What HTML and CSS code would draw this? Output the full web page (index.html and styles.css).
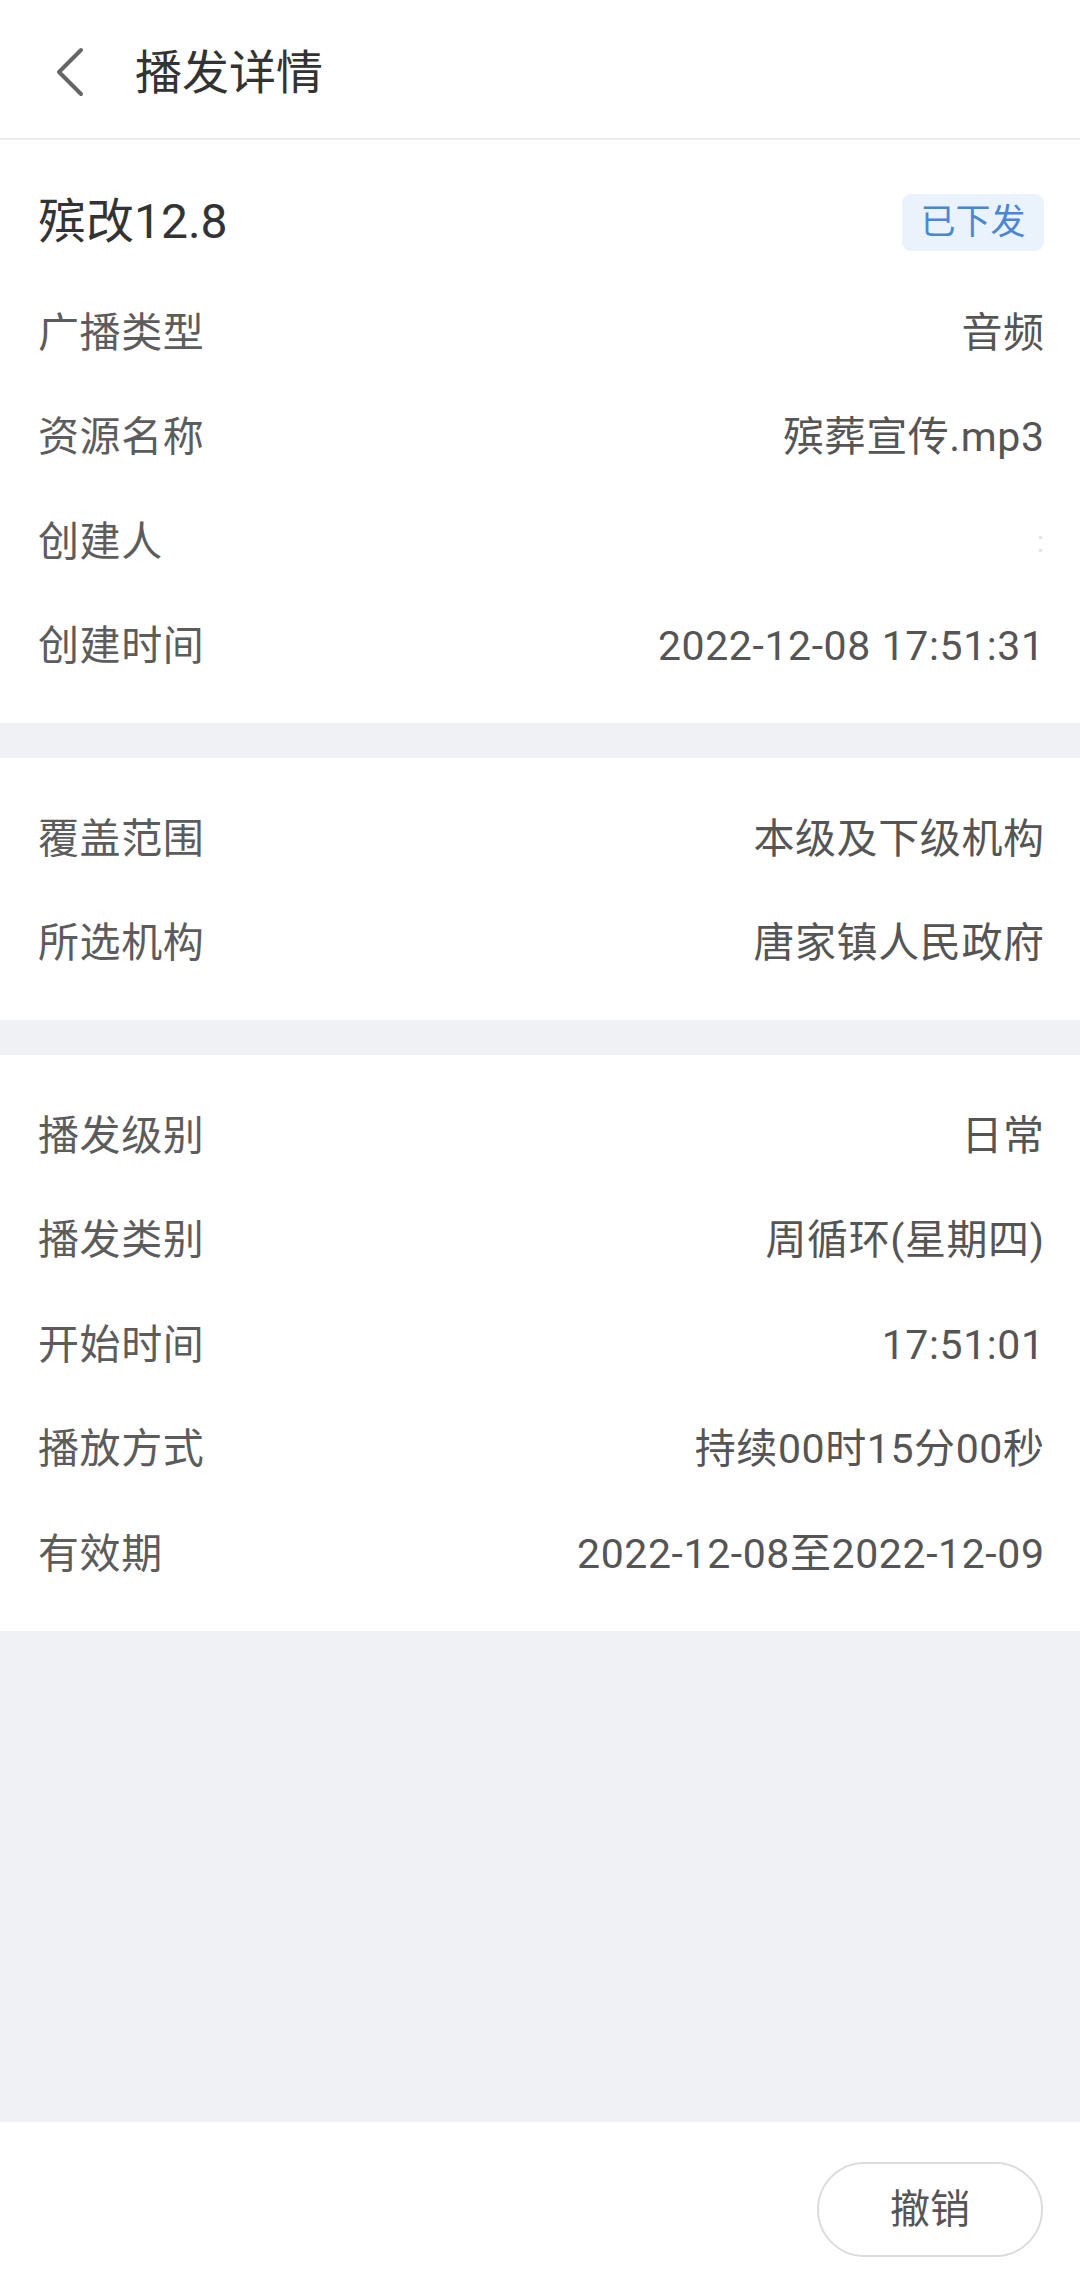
FILE: index.html
```html
<!DOCTYPE html>
<html lang="zh-CN">
<head>
<meta charset="utf-8">
<title>播发详情</title>
<link rel="stylesheet" href="styles.css">
</head>
<body>
<div class="page">
  <header class="topbar">
    <svg class="back" width="30" height="50" viewBox="0 0 30 50" aria-hidden="true">
      <polyline points="26,3 4,25 26,47" fill="none" stroke="#666" stroke-width="4" stroke-linecap="round" stroke-linejoin="round"/>
    </svg>
    <h1 class="topbar-title">播发详情</h1>
  </header>

  <section class="card">
    <div class="card-head">
      <span class="card-title">殡改12.8</span>
      <span class="badge">已下发</span>
    </div>
    <div class="row"><span class="label">广播类型</span><span class="value">音频</span></div>
    <div class="row"><span class="label">资源名称</span><span class="value">殡葬宣传.mp3</span></div>
    <div class="row"><span class="label">创建人</span><span class="value faint">:</span></div>
    <div class="row"><span class="label">创建时间</span><span class="value">2022-12-08 17:51:31</span></div>
  </section>

  <section class="card">
    <div class="row"><span class="label">覆盖范围</span><span class="value">本级及下级机构</span></div>
    <div class="row"><span class="label">所选机构</span><span class="value">唐家镇人民政府</span></div>
  </section>

  <section class="card">
    <div class="row"><span class="label">播发级别</span><span class="value">日常</span></div>
    <div class="row"><span class="label">播发类别</span><span class="value">周循环(星期四)</span></div>
    <div class="row"><span class="label">开始时间</span><span class="value">17:51:01</span></div>
    <div class="row"><span class="label">播放方式</span><span class="value">持续00时15分00秒</span></div>
    <div class="row"><span class="label">有效期</span><span class="value">2022-12-08至2022-12-09</span></div>
  </section>

  <div class="spacer"></div>

  <footer class="bottombar">
    <button class="btn-cancel" type="button">撤销</button>
  </footer>
</div>
</body>
</html>
```

FILE: styles.css
```css
* {
  box-sizing: border-box;
}

html, body {
  margin: 0;
  padding: 0;
  background: #f0f1f5;
}

body {
  font-family: Roboto, "Noto Sans CJK SC", "Noto Sans", sans-serif;
  color: #5c5c5c;
}

.page {
  display: flex;
  flex-direction: column;
  width: 1080px;
  height: 2293px;
  background: #f0f1f5;
}

.topbar {
  display: flex;
  align-items: center;
  height: 140px;
  padding: 6px 0 0 55px;
  background: #fff;
  border-bottom: 2px solid #ececec;
  flex-shrink: 0;
}

.back {
  display: block;
  width: 30px;
  height: 50px;
}

.topbar-title {
  margin: 0 0 0 50px;
  font-size: 47px;
  font-weight: 400;
  color: #333;
  line-height: 1;
}

.card {
  background: #fff;
  padding: 29px 36px 24px 38px;
  margin-bottom: 35px;
  flex-shrink: 0;
}

.card-head {
  display: flex;
  align-items: center;
  justify-content: space-between;
  height: 106px;
  margin-bottom: 6px;
}

.card-title {
  font-size: 48px;
  color: #333;
  line-height: 1;
}

.badge {
  display: flex;
  align-items: center;
  justify-content: center;
  width: 142px;
  height: 57px;
  border-radius: 9px;
  background: #eaf2fc;
  color: #4a87d3;
  font-size: 35px;
  line-height: 1;
}

.row {
  display: flex;
  align-items: center;
  justify-content: space-between;
  height: 104.5px;
  font-size: 41px;
  letter-spacing: 0.6px;
  line-height: 1;
}

.label {
  color: #5c5c5c;
}

.value {
  color: #555;
  text-align: right;
  margin-right: -0.6px;
}

.faint {
  color: #e4e4e4;
  font-size: 30px;
}

.spacer {
  flex: 1;
}

.bottombar {
  display: flex;
  justify-content: flex-end;
  align-items: flex-start;
  height: 171px;
  padding: 40px 37px 0 0;
  background: #fff;
  flex-shrink: 0;
}

.btn-cancel {
  width: 226px;
  height: 95px;
  border: 2px solid #dcdcdc;
  border-radius: 48px;
  background: #fff;
  color: #555;
  font-family: Roboto, "Noto Sans CJK SC", sans-serif;
  font-size: 40px;
  line-height: 1;
  padding: 0;
}
```
